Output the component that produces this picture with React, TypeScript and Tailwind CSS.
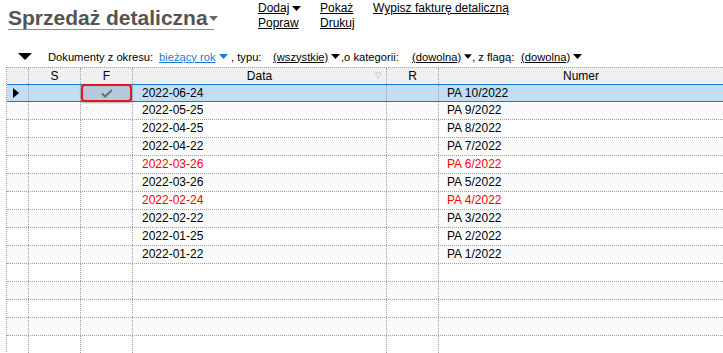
import React from 'react'

type Row = { date: string; num: string; red?: boolean }

const rows: Row[] = [
  { date: '2022-06-24', num: 'PA 10/2022' },
  { date: '2022-05-25', num: 'PA 9/2022' },
  { date: '2022-04-25', num: 'PA 8/2022' },
  { date: '2022-04-22', num: 'PA 7/2022' },
  { date: '2022-03-26', num: 'PA 6/2022', red: true },
  { date: '2022-03-26', num: 'PA 5/2022' },
  { date: '2022-02-24', num: 'PA 4/2022', red: true },
  { date: '2022-02-22', num: 'PA 3/2022' },
  { date: '2022-01-25', num: 'PA 2/2022' },
  { date: '2022-01-22', num: 'PA 1/2022' },
]

const emptyRows = 6

function Caret({ className = '' }: { className?: string }) {
  return (
    <svg className={className} width="9" height="5" viewBox="0 0 9 5">
      <path d="M0 0h9L4.5 5z" fill="currentColor" />
    </svg>
  )
}

function Check() {
  return (
    <svg width="12" height="9" viewBox="0 0 12 9">
      <path d="M1 4.5l3 3L11 1" fill="none" stroke="#6f6f6f" strokeWidth="2" />
    </svg>
  )
}

const cell = 'border-l border-dotted border-[#a0a0a0] h-full'

export default function App() {
  return (
    <div className="w-[723px] h-[353px] overflow-hidden bg-white font-['Liberation_Sans',Arial,sans-serif] text-black">
      {/* title + actions */}
      <div className="flex h-[46px]">
        <div className="ml-[8px] mt-[5px] flex h-[25px] w-[206px] shrink-0 items-center whitespace-nowrap border-b border-[#8a8a8a]">
          <span className="shrink-0 text-[21px] font-bold leading-[23px] text-[#545454]">Sprzedaż detaliczna</span>
          <Caret className="ml-[1px] mt-[2px] shrink-0 text-[#6a6a6a]" />
        </div>
        <div className="ml-[44px] mt-[1px] flex w-[62px] shrink-0 flex-col gap-[1px] text-[12px] leading-[14px]">
          <span className="flex items-center">
            <span className="underline">Dodaj</span>
            <Caret className="ml-[3px]" />
          </span>
          <span className="underline">Popraw</span>
        </div>
        <div className="mt-[1px] flex w-[53px] shrink-0 flex-col gap-[1px] text-[12px] leading-[14px]">
          <span className="underline">Pokaż</span>
          <span className="underline">Drukuj</span>
        </div>
        <div className="mt-[1px] whitespace-nowrap text-[12px] leading-[14px]">
          <span className="underline">Wypisz fakturę detaliczną</span>
        </div>
      </div>

      {/* filter line */}
      <div className="flex h-[21px] items-center whitespace-nowrap text-[11.2px] leading-[14px]">
        <div className="w-[48px] shrink-0 pl-[18px]">
          <svg width="14" height="7" viewBox="0 0 14 7">
            <path d="M0 0h14L7 7z" fill="#000" />
          </svg>
        </div>
        <span className="w-[111px] shrink-0">Dokumenty z okresu:</span>
        <span className="flex w-[72px] shrink-0 items-center text-[#1c7ad8]">
          <span className="underline">bieżący rok</span>
          <Caret className="ml-[3px]" />
        </span>
        <span className="w-[42px] shrink-0">, typu:</span>
        <span className="flex w-[68px] shrink-0 items-center">
          <span className="underline">(wszystkie)</span>
          <Caret className="ml-[3px]" />
        </span>
        <span className="w-[71px] shrink-0">,o kategorii:</span>
        <span className="flex w-[60px] shrink-0 items-center">
          <span className="underline">(dowolna)</span>
          <Caret className="ml-[3px]" />
        </span>
        <span className="w-[49px] shrink-0">, z flagą:</span>
        <span className="flex items-center">
          <span className="underline">(dowolna)</span>
          <Caret className="ml-[3px]" />
        </span>
      </div>

      {/* grid */}
      <div className="ml-[6px] border-l border-dotted border-[#a0a0a0] text-[12px]">
        <div className="flex h-[17px] items-center border-t border-dotted border-[#a0a0a0] bg-[#f0f0f0] leading-[16px]">
          <div className="w-[21px] h-full" />
          <div className={`${cell} w-[52px] text-center`}>S</div>
          <div className={`${cell} w-[52px] text-center`}>F</div>
          <div className={`${cell} relative w-[254px] text-center`}>
            Data
            <span className="absolute right-[5px] top-0 text-[8px] text-[#b0b0b0]">▽</span>
          </div>
          <div className={`${cell} w-[52px] text-center`}>R</div>
          <div className={`${cell} flex-1 text-center`}>Numer</div>
        </div>

        {rows.map((r, i) => {
          const selected = i === 0
          const bg = selected ? 'bg-[#c3ddf4]' : i % 2 === 1 ? 'bg-[#fafafa]' : 'bg-white'
          const border = selected
            ? 'border-y border-[#1a79d4]'
            : 'border-b border-dotted border-[#a0a0a0]'
          const color = r.red ? 'text-[#ff0000]' : 'text-black'
          return (
            <div key={i} className={`flex h-[18px] items-center leading-[16px] ${bg} ${border}`}>
              <div className="flex w-[21px] h-full items-center pl-[6px]">
                {selected && (
                  <svg width="6" height="10" viewBox="0 0 6 10">
                    <path d="M0 0l6 5-6 5z" fill="#000" />
                  </svg>
                )}
              </div>
              <div className={`${cell} w-[52px]`} />
              <div className={`${cell} relative w-[52px]`}>
                {selected && (
                  <div className="absolute left-0 -top-[1px] flex h-[18px] w-[51px] items-center justify-center rounded-[4px] border-2 border-[#e8131e] bg-[#b4c9db] shadow-[0_1px_2px_rgba(0,0,0,0.3)]">
                    <Check />
                  </div>
                )}
              </div>
              <div className={`${cell} w-[254px] pl-[9px] ${color}`}>{r.date}</div>
              <div className={`${cell} w-[52px]`} />
              <div className={`${cell} flex-1 pl-[8px] ${color}`}>{r.num}</div>
            </div>
          )
        })}

        {Array.from({ length: emptyRows }).map((_, j) => {
          const i = rows.length + j
          const bg = i % 2 === 1 ? 'bg-[#fafafa]' : 'bg-white'
          return (
            <div key={`e${j}`} className={`flex h-[18px] border-b border-dotted border-[#a0a0a0] ${bg}`}>
              <div className="w-[21px] h-full" />
              <div className={`${cell} w-[52px]`} />
              <div className={`${cell} w-[52px]`} />
              <div className={`${cell} w-[254px]`} />
              <div className={`${cell} w-[52px]`} />
              <div className={`${cell} flex-1`} />
            </div>
          )
        })}
      </div>
    </div>
  )
}
